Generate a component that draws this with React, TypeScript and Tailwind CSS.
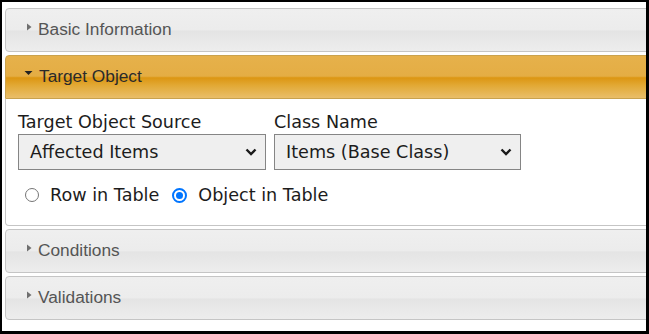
import React from "react";

const grayHeader =
  "h-[44px] shrink-0 flex items-center border border-[#c5c5c5] rounded-[4px] bg-[linear-gradient(to_bottom,#efefef_0%,#ececec_50%,#e4e4e4_52%,#ededed_100%)]";

function RightTri() {
  return (
    <svg width="8" height="8" viewBox="0 0 8 8" className="-translate-y-[3px] shrink-0">
      <path d="M2 0.5 L6.5 4 L2 7.5 Z" fill="#6f6f6f" />
    </svg>
  );
}

function CollapsedHeader({ title }: { title: string }) {
  return (
    <div className={grayHeader + " pl-[19px]"}>
      <RightTri />
      <span className="ml-[5px] text-[17.3px] text-[#555] font-['Liberation_Sans',Arial,sans-serif]">
        {title}
      </span>
    </div>
  );
}

function Chevron() {
  return (
    <svg width="12" height="8" viewBox="0 0 12 8" className="shrink-0">
      <path d="M1.5 1.5 L6 6 L10.5 1.5" fill="none" stroke="#1a1a1a" strokeWidth="2.4" />
    </svg>
  );
}

function FakeSelect({ value, width }: { value: string; width: string }) {
  return (
    <div
      className={
        width +
        " h-[36px] mt-[2px] flex items-center justify-between border border-[#858585] bg-[#efefef] pl-[11px] pr-[8px]"
      }
    >
      <span>{value}</span>
      <Chevron />
    </div>
  );
}

export default function App() {
  return (
    <div className="w-[649px] h-[334px] overflow-hidden bg-white border-black border-l-[2px] border-t-[2px] border-r-[3px] border-b-[3px]">
      <div className="pl-[3px] pt-[6px] w-[680px] flex flex-col">
        <CollapsedHeader title="Basic Information" />

        <div className="mt-[3px] h-[44px] shrink-0 flex items-center pl-[18px] border border-[#c9a24e] rounded-t-[4px] bg-[linear-gradient(to_bottom,#e6b14b_0%,#e4ad44_48%,#dc9612_52%,#e2a935_70%,#e9be6a_100%)]">
          <svg width="9" height="8" viewBox="0 0 9 8" className="-translate-y-[4px] shrink-0">
            <path d="M0.5 2 L8.5 2 L4.5 6 Z" fill="#222" />
          </svg>
          <span className="ml-[6px] text-[17.3px] text-[#2a2a2a] font-['Liberation_Sans',Arial,sans-serif]">
            Target Object
          </span>
        </div>

        <div className="h-[127px] shrink-0 border-l border-r border-b border-[#c5c5c5] rounded-b-[4px] bg-white pl-[12px] pt-[13px] text-[17.6px] leading-[20px] text-[#1c1c1c] font-['DejaVu_Sans',Verdana,sans-serif]">
          <div className="flex gap-[8px]">
            <div className="flex flex-col">
              <span>Target Object Source</span>
              <FakeSelect value="Affected Items" width="w-[248px]" />
            </div>
            <div className="flex flex-col">
              <span>Class Name</span>
              <FakeSelect value="Items (Base Class)" width="w-[247px]" />
            </div>
          </div>
          <div className="mt-[15px] flex items-center pl-[7px]">
            <span className="w-[14px] h-[14px] rounded-full border border-[#767676] bg-white shrink-0" />
            <span className="ml-[11px]">Row in Table</span>
            <span className="ml-[13px] w-[15px] h-[15px] rounded-full border-2 border-[#0075ff] bg-white flex items-center justify-center shrink-0">
              <span className="w-[7px] h-[7px] rounded-full bg-[#0075ff]" />
            </span>
            <span className="ml-[11px]">Object in Table</span>
          </div>
        </div>

        <div className="mt-[3px]">
          <CollapsedHeader title="Conditions" />
        </div>
        <div className="mt-[3px]">
          <CollapsedHeader title="Validations" />
        </div>
      </div>
    </div>
  );
}
